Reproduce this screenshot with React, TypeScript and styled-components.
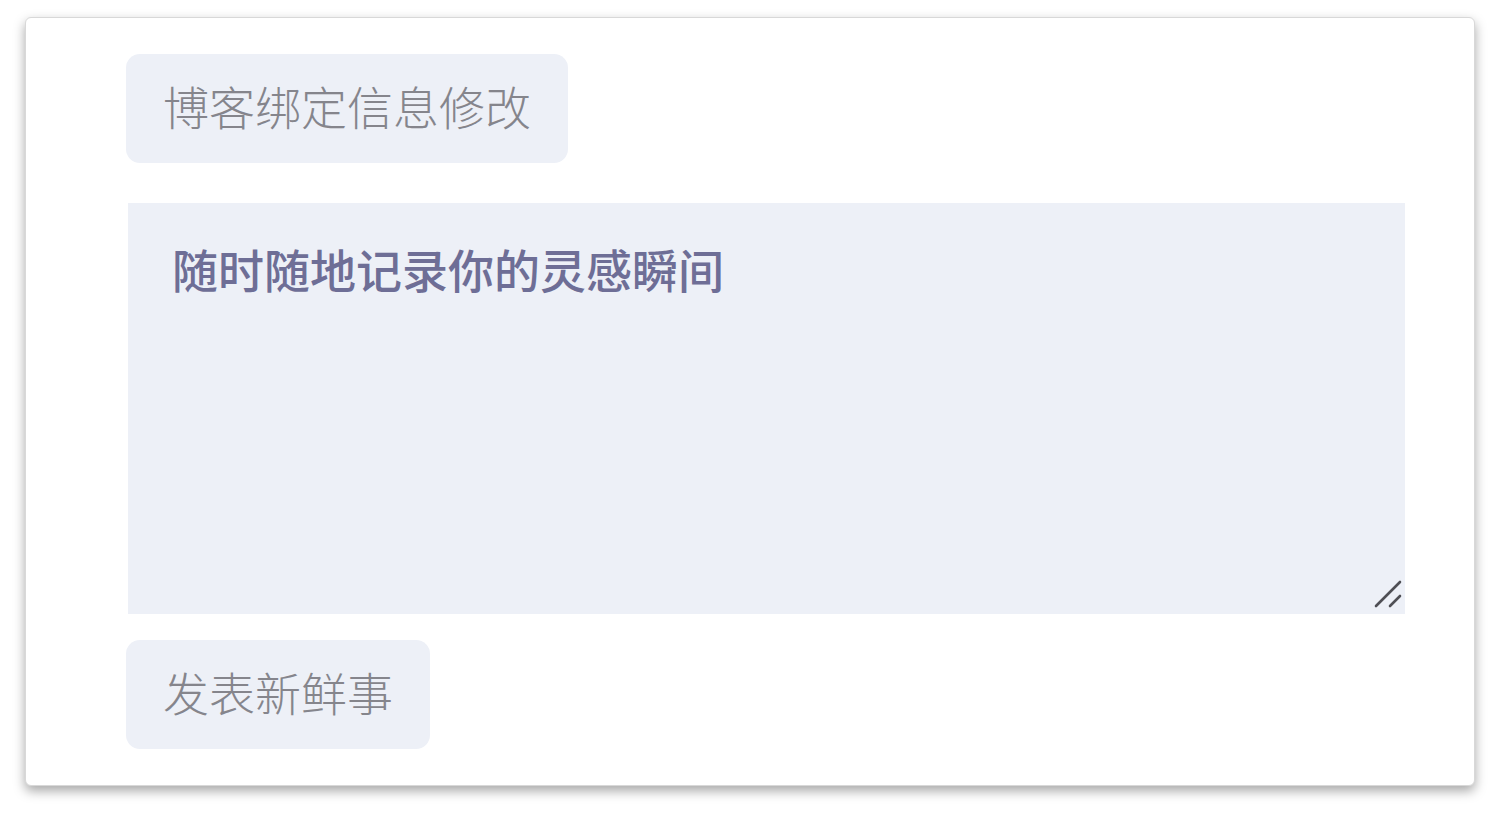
import React from 'react';
import styled, { createGlobalStyle } from 'styled-components';

const GlobalStyle = createGlobalStyle`
    html, body {
        margin: 0;
        padding: 0;
        background: #ffffff;
    }
    body {
        font-family: "Noto Sans CJK SC", "Noto Sans", sans-serif;
    }
`;

const Page = styled.div`
    padding: 17px 25px 30px;
`;

const Card = styled.div`
    display: flex;
    flex-direction: column;
    align-items: flex-start;
    padding: 36px 69px 36px 100px;
    background: #ffffff;
    border: 1px solid #d8d8d8;
    border-radius: 6px;
    box-shadow: 0 5px 12px rgba(0, 0, 0, 0.35);
`;

const SoftButton = styled.button`
    display: flex;
    align-items: center;
    height: 109px;
    padding: 0 37px 8px;
    border: none;
    border-radius: 14px;
    background: #edf0f7;
    color: #85858c;
    font-family: "Noto Sans CJK SC", sans-serif;
    font-size: 46px;
    font-weight: 300;
    line-height: 1;
    cursor: pointer;
`;

const EditorWrap = styled.div`
    position: relative;
    align-self: stretch;
    margin: 40px 0 26px 2px;
`;

const Editor = styled.textarea`
    display: block;
    box-sizing: border-box;
    width: 100%;
    height: 411px;
    padding: 33px 44px;
    border: none;
    outline: none;
    resize: none;
    background: #edf0f7;
    font-family: "Noto Sans CJK SC", sans-serif;
    font-size: 46px;
    line-height: 1.4;
    color: #4a4a70;

    &::placeholder {
        color: #6e6e96;
        font-weight: 500;
    }
`;

const ResizeGrip = styled.svg`
    position: absolute;
    right: 2px;
    bottom: 4px;
    width: 30px;
    height: 30px;
    pointer-events: none;
`;

export default function App() {
    return (
        <Page>
            <GlobalStyle />
            <Card>
                <SoftButton>博客绑定信息修改</SoftButton>
                <EditorWrap>
                    <Editor placeholder="随时随地记录你的灵感瞬间" />
                    <ResizeGrip viewBox="0 0 30 30">
                        <path
                            d="M3 26 L27 2 M17 26 L27 16"
                            stroke="#4f4f55"
                            strokeWidth="2.6"
                            strokeLinecap="round"
                            fill="none"
                        />
                    </ResizeGrip>
                </EditorWrap>
                <SoftButton>发表新鲜事</SoftButton>
            </Card>
        </Page>
    );
}
